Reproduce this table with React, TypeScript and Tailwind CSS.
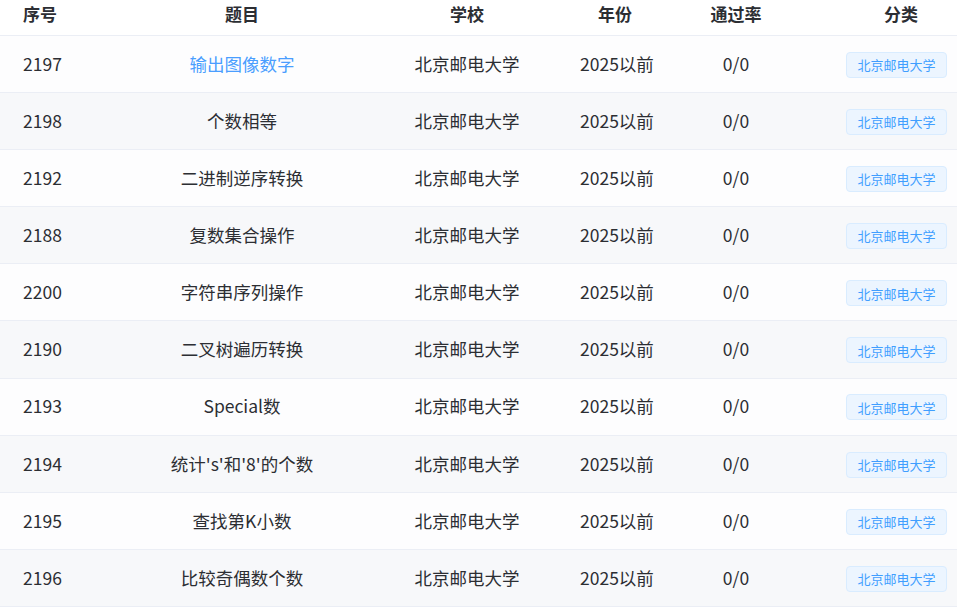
import React from "react";

type Row = {
  id: number;
  title: string;
  school: string;
  year: string;
  rate: string;
  tag: string;
  active?: boolean;
};

const ROWS: Row[] = [
  { id: 2197, title: "输出图像数字", school: "北京邮电大学", year: "2025以前", rate: "0/0", tag: "北京邮电大学", active: true },
  { id: 2198, title: "个数相等", school: "北京邮电大学", year: "2025以前", rate: "0/0", tag: "北京邮电大学" },
  { id: 2192, title: "二进制逆序转换", school: "北京邮电大学", year: "2025以前", rate: "0/0", tag: "北京邮电大学" },
  { id: 2188, title: "复数集合操作", school: "北京邮电大学", year: "2025以前", rate: "0/0", tag: "北京邮电大学" },
  { id: 2200, title: "字符串序列操作", school: "北京邮电大学", year: "2025以前", rate: "0/0", tag: "北京邮电大学" },
  { id: 2190, title: "二叉树遍历转换", school: "北京邮电大学", year: "2025以前", rate: "0/0", tag: "北京邮电大学" },
  { id: 2193, title: "Special数", school: "北京邮电大学", year: "2025以前", rate: "0/0", tag: "北京邮电大学" },
  { id: 2194, title: "统计's'和'8'的个数", school: "北京邮电大学", year: "2025以前", rate: "0/0", tag: "北京邮电大学" },
  { id: 2195, title: "查找第K小数", school: "北京邮电大学", year: "2025以前", rate: "0/0", tag: "北京邮电大学" },
  { id: 2196, title: "比较奇偶数个数", school: "北京邮电大学", year: "2025以前", rate: "0/0", tag: "北京邮电大学" },
];

const GRID = "grid grid-cols-[130px_224px_226px_70px_172px_1fr] items-center";

export default function App() {
  return (
    <div
      className="w-[957px] h-[608px] overflow-hidden bg-white text-[#2c2e33]"
      style={{ fontFamily: '"Noto Sans CJK SC", "Noto Sans", sans-serif' }}
    >
      {/* header */}
      <div className={`${GRID} h-[36px] border-b border-[#ebeef5] pb-[8px] text-[17px] font-bold`}>
        <div className="pl-[23px]">序号</div>
        <div className="text-center">题目</div>
        <div className="text-center">学校</div>
        <div className="text-center whitespace-nowrap">年份</div>
        <div className="text-center">通过率</div>
        <div className="pl-[62px] whitespace-nowrap">分类</div>
      </div>

      {ROWS.map((r, i) => (
        <div
          key={r.id}
          className={`${GRID} h-[57.1px] border-b border-[#ebeef5] text-[17.5px] ${
            i % 2 === 1 ? "bg-[#f7f8fa]" : "bg-[#fdfdfe]"
          }`}
        >
          <div className="pl-[23px]">{r.id}</div>
          <div className={`text-center whitespace-nowrap ${r.active ? "text-[#4a9eff]" : ""}`}>
            {r.title}
          </div>
          <div className="text-center whitespace-nowrap">{r.school}</div>
          <div className="text-center whitespace-nowrap">{r.year}</div>
          <div className="text-center">{r.rate}</div>
          <div className="pl-[24px]">
            <span className="inline-flex h-[26px] w-[101px] items-center justify-center rounded-[4px] border border-[#d9ecff] bg-[#ecf5ff] text-[13px] text-[#409eff] whitespace-nowrap">
              {r.tag}
            </span>
          </div>
        </div>
      ))}
    </div>
  );
}
